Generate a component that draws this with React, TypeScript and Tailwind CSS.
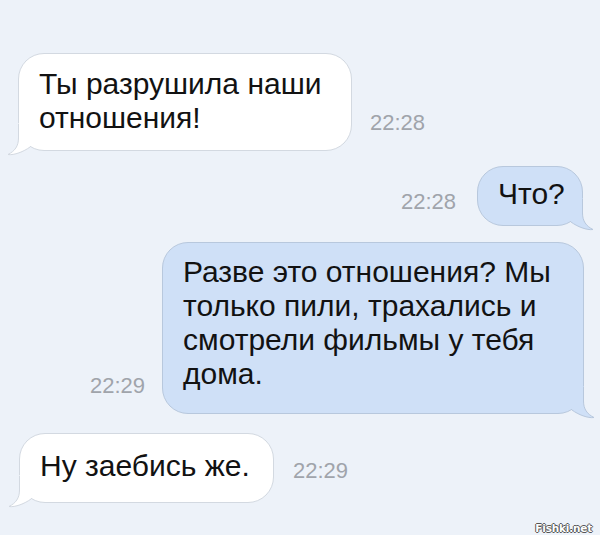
import React from "react";

type Side = "in" | "out";

// bubble corner tail, drawn in bubble coordinates: (0,0) is the outer bottom-left corner
function Tail({ side }: { side: Side }) {
  const fill = side === "in" ? "#ffffff" : "#cfe0f7";
  const stroke = side === "in" ? "#d3d9e1" : "#b8c8dd";
  return (
    <svg
      width="40"
      height="34"
      viewBox="-12 -28 40 34"
      className={
        side === "in"
          ? "absolute -left-[13px] -bottom-[7px]"
          : "absolute -right-[13px] -bottom-[7px] -scale-x-100"
      }
    >
      <path
        d="M0.5 -28 L0.5 -13 C0.5 -5 -3 0 -10 3.5 C-4 4.5 6 0.5 12 -4 L12 -28 Z"
        fill={fill}
      />
      <path
        d="M0.5 -27 L0.5 -13 C0.5 -5 -3 0 -10 3.5 C-4 4.5 6 0.5 12 -4"
        fill="none"
        stroke={stroke}
        strokeWidth="1"
      />
    </svg>
  );
}

function Bubble({
  side,
  className,
  lines,
}: {
  side: Side;
  className: string;
  lines: string[];
}) {
  const tone =
    side === "in"
      ? "bg-white border-[#d3d9e1]"
      : "bg-[#cfe0f7] border-[#b8c8dd]";
  return (
    <div
      className={`relative shrink-0 rounded-[26px] border pl-[20px] ${tone} ${className}`}
    >
      <Tail side={side} />
      <div className="relative whitespace-nowrap text-[30px] leading-[34px] text-[#121212]">
        {lines.map((l, i) => (
          <div key={i}>{l}</div>
        ))}
      </div>
    </div>
  );
}

function Time({ children, className }: { children: string; className: string }) {
  return (
    <span className={`text-[22px] leading-none text-[#a0a4ab] ${className}`}>
      {children}
    </span>
  );
}

export default function App() {
  return (
    <div className="relative h-[535px] w-[600px] overflow-hidden bg-[#edf2f9] pt-[53px] font-['Liberation_Sans',Arial,sans-serif]">
      <div className="flex items-end pl-[18px]">
        <Bubble
          side="in"
          className="w-[334px] pt-[13px] pb-[15px]"
          lines={["Ты разрушила наши", "отношения!"]}
        />
        <Time className="mb-[17px] ml-[18px]">22:28</Time>
      </div>

      <div className="mt-[15px] flex items-end justify-end pr-[17px]">
        <Time className="mb-[13px] mr-[21px]">22:28</Time>
        <Bubble
          side="out"
          className="w-[106px] pt-[10px] pb-[14px]"
          lines={["Что?"]}
        />
      </div>

      <div className="mt-[16px] flex items-end justify-end pr-[16px]">
        <Time className="mb-[17px] mr-[17px]">22:29</Time>
        <Bubble
          side="out"
          className="w-[422px] pt-[12px] pb-[22px]"
          lines={[
            "Разве это отношения? Мы",
            "только пили, трахались и",
            "смотрели фильмы у тебя",
            "дома.",
          ]}
        />
      </div>

      <div className="mt-[19px] flex items-end pl-[19px]">
        <Bubble
          side="in"
          className="w-[255px] pt-[15px] pb-[19px]"
          lines={["Ну заебись же."]}
        />
        <Time className="mb-[21px] ml-[19px]">22:29</Time>
      </div>

      <div className="absolute bottom-[2px] right-[8px] font-['DejaVu_Sans',sans-serif] text-[10.5px] font-bold leading-none tracking-[-0.2px] text-white [text-shadow:-1px_0_#555,1px_0_#555,0_-1px_#555,0_1px_#555]">
        Fishki.net
      </div>
    </div>
  );
}
